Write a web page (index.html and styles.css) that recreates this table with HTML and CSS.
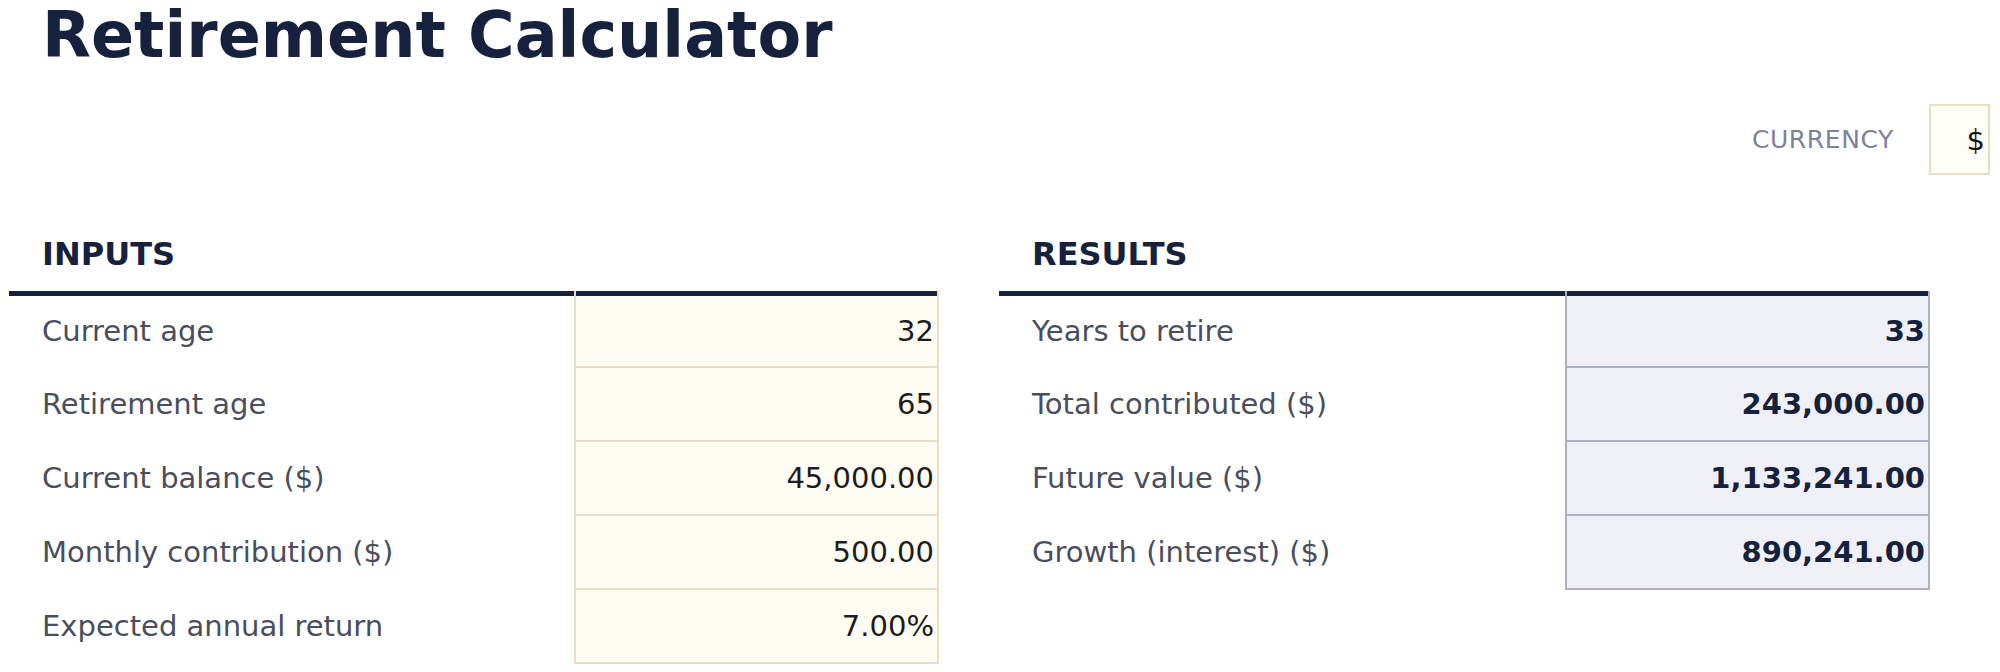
FILE: index.html
```html
<!DOCTYPE html>
<html lang="en">
<head>
<meta charset="utf-8">
<title>Retirement Calculator</title>
<link rel="stylesheet" href="styles.css">
</head>
<body>
<div class="page">
  <h1 class="title">Retirement Calculator</h1>
  <div class="currency-row">
    <span class="currency-label">CURRENCY</span>
    <div class="currency-box">$</div>
  </div>
  <div class="sections">
    <section class="panel panel-inputs">
      <h2 class="panel-title">INPUTS</h2>
      <div class="grid">
        <div class="label first">Current age</div><div class="val input first">32</div>
        <div class="label">Retirement age</div><div class="val input">65</div>
        <div class="label">Current balance ($)</div><div class="val input">45,000.00</div>
        <div class="label">Monthly contribution ($)</div><div class="val input">500.00</div>
        <div class="label">Expected annual return</div><div class="val input">7.00%</div>
      </div>
    </section>
    <section class="panel panel-results">
      <h2 class="panel-title">RESULTS</h2>
      <div class="grid">
        <div class="label first">Years to retire</div><div class="val result first">33</div>
        <div class="label">Total contributed ($)</div><div class="val result">243,000.00</div>
        <div class="label">Future value ($)</div><div class="val result">1,133,241.00</div>
        <div class="label">Growth (interest) ($)</div><div class="val result">890,241.00</div>
      </div>
    </section>
  </div>
</div>
</body>
</html>
```
FILE: styles.css
```css
html, body {
  margin: 0;
  padding: 0;
  background: #ffffff;
}

body {
  font-family: "DejaVu Sans", "Liberation Sans", sans-serif;
  color: #1c1c1c;
}

.page {
  padding: 0 10px 0 9px;
}

.title {
  margin: 0;
  padding: 3px 0 0 33px;
  font-size: 63.6px;
  line-height: 64px;
  font-weight: 700;
  color: #16213e;
}

.currency-row {
  margin-top: 37px;
  display: flex;
  justify-content: flex-end;
  align-items: center;
  gap: 35px;
}

.currency-label {
  font-size: 25px;
  letter-spacing: 0.6px;
  color: #7d8297;
}

.currency-box {
  box-sizing: border-box;
  width: 61px;
  height: 71px;
  border: 2px solid #e8dfc2;
  background: #fffdf5;
  display: flex;
  align-items: center;
  justify-content: flex-end;
  padding-right: 3px;
  font-size: 29px;
  color: #151515;
}

.sections {
  display: flex;
  gap: 60px;
  margin-top: 61px;
}

.panel-title {
  margin: 0 0 19px 0;
  padding-left: 33px;
  font-size: 32px;
  line-height: 36px;
  font-weight: 700;
  color: #16213e;
}

.grid {
  display: grid;
}

.panel-inputs .grid {
  grid-template-columns: 565px 365px;
}

.panel-results .grid {
  grid-template-columns: 566px 365px;
}

.label {
  box-sizing: border-box;
  display: flex;
  align-items: center;
  padding: 0 0 2px 33px;
  font-size: 29px;
  color: #4a4e5c;
  white-space: nowrap;
}

.label.first {
  border-top: 5px solid #16213e;
}

.val {
  box-sizing: border-box;
  height: 74px;
  display: flex;
  align-items: center;
  justify-content: flex-end;
  padding-right: 3px;
  font-size: 29px;
  white-space: nowrap;
  border-style: solid;
  border-width: 0 2px 2px 2px;
}

.val.first {
  height: 77px;
  padding-top: 5px;
  box-shadow: inset 0 5px 0 #16213e;
}

.val.input {
  background: #fffcf3;
  border-color: #e8dec2;
  color: #1c1c1c;
}

.val.result {
  background: #eef0f6;
  border-color: #aab1c8;
  color: #16213e;
  font-weight: 700;
}
```
